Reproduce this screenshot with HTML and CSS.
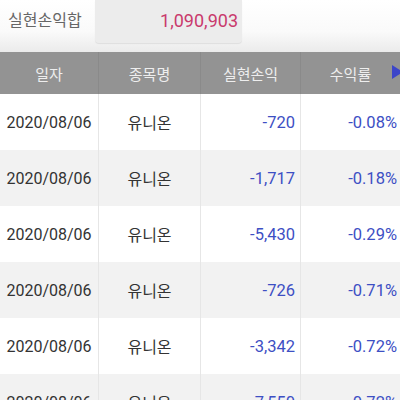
FILE: index.html
```html
<!DOCTYPE html>
<html lang="ko">
<head>
    <meta charset="UTF-8">
    <meta name="viewport" content="width=device-width, initial-scale=1.0">
    <title>실현손익</title>
    <link rel="stylesheet" href="styles.css">
</head>
<body>

<main>
    <!-- 합계 -->
    <div class="summary">
        <span class="summary-label">실현손익합</span>
        <div class="summary-box">1,090,903</div>
    </div>

    <!-- 헤더 -->
    <div class="grid-head">
        <div class="cell">일자</div>
        <div class="cell">종목명</div>
        <div class="cell">실현손익</div>
        <div class="cell">수익률 <span class="more"></span></div>
    </div>

    <!-- 목록 -->
    <div class="grid-body">
        <div class="row">
            <div class="cell date">2020/08/06</div>
            <div class="cell name">유니온</div>
            <div class="cell num">-720</div>
            <div class="cell rate">-0.08%</div>
        </div>
        <div class="row">
            <div class="cell date">2020/08/06</div>
            <div class="cell name">유니온</div>
            <div class="cell num">-1,717</div>
            <div class="cell rate">-0.18%</div>
        </div>
        <div class="row">
            <div class="cell date">2020/08/06</div>
            <div class="cell name">유니온</div>
            <div class="cell num">-5,430</div>
            <div class="cell rate">-0.29%</div>
        </div>
        <div class="row">
            <div class="cell date">2020/08/06</div>
            <div class="cell name">유니온</div>
            <div class="cell num">-726</div>
            <div class="cell rate">-0.71%</div>
        </div>
        <div class="row">
            <div class="cell date">2020/08/06</div>
            <div class="cell name">유니온</div>
            <div class="cell num">-3,342</div>
            <div class="cell rate">-0.72%</div>
        </div>
        <div class="row">
            <div class="cell date">2020/08/06</div>
            <div class="cell name">유니온</div>
            <div class="cell num">-7,550</div>
            <div class="cell rate">-0.72%</div>
        </div>
    </div>
</main>

</body>
</html>
```

FILE: styles.css
```css
body {
    font-family: Roboto, 'Noto Sans CJK KR', sans-serif;
    background-color: white;
    margin: 0;
    padding: 0;
    overflow: hidden;
}

main {
    width: 400px;
}

.summary {
    height: 52px;
    display: flex;
    align-items: flex-start;
    background: linear-gradient(to bottom, #ffffff 0%, #fafafa 60%, #ebebeb 100%);
}

.summary-label {
    width: 95px;
    padding-left: 8px;
    box-sizing: border-box;
    line-height: 42px;
    font-size: 16px;
    color: #666;
}

.summary-box {
    width: 147px;
    height: 43px;
    box-sizing: border-box;
    padding-right: 4px;
    text-align: right;
    line-height: 42px;
    font-size: 18px;
    color: #c93a6c;
    background-color: #ececec;
    border-radius: 0 0 4px 4px;
    box-shadow: 0 1px 1px rgba(0, 0, 0, 0.08);
}

.grid-head,
.row {
    display: grid;
    grid-template-columns: 98px 102px 100px 100px;
}

.grid-head {
    height: 42px;
    background-color: #939393;
    color: #eeeeee;
    font-size: 15px;
}

.grid-head .cell {
    display: flex;
    align-items: center;
    justify-content: center;
    border-left: 1px solid #8a8a8a;
}

.grid-head .cell:first-child {
    border-left: none;
}

.more {
    position: absolute;
    left: 392px;
    top: 65px;
    width: 0;
    height: 0;
    border-top: 7px solid transparent;
    border-bottom: 7px solid transparent;
    border-left: 11px solid #3c45c9;
}

.row {
    height: 56px;
    font-size: 16px;
}

.row:nth-child(even) {
    background-color: #f2f2f2;
}

.row .cell {
    display: flex;
    align-items: center;
    border-left: 1px solid #e6e6e6;
}

.row .cell:first-child {
    border-left: none;
}

.date {
    justify-content: center;
    color: #333;
}

.name {
    justify-content: center;
    color: #333;
}

.num,
.rate {
    justify-content: flex-end;
    color: #3d4fc4;
    font-size: 16.5px;
}

.num {
    padding-right: 5px;
}

.rate {
    padding-right: 3px;
}
```
